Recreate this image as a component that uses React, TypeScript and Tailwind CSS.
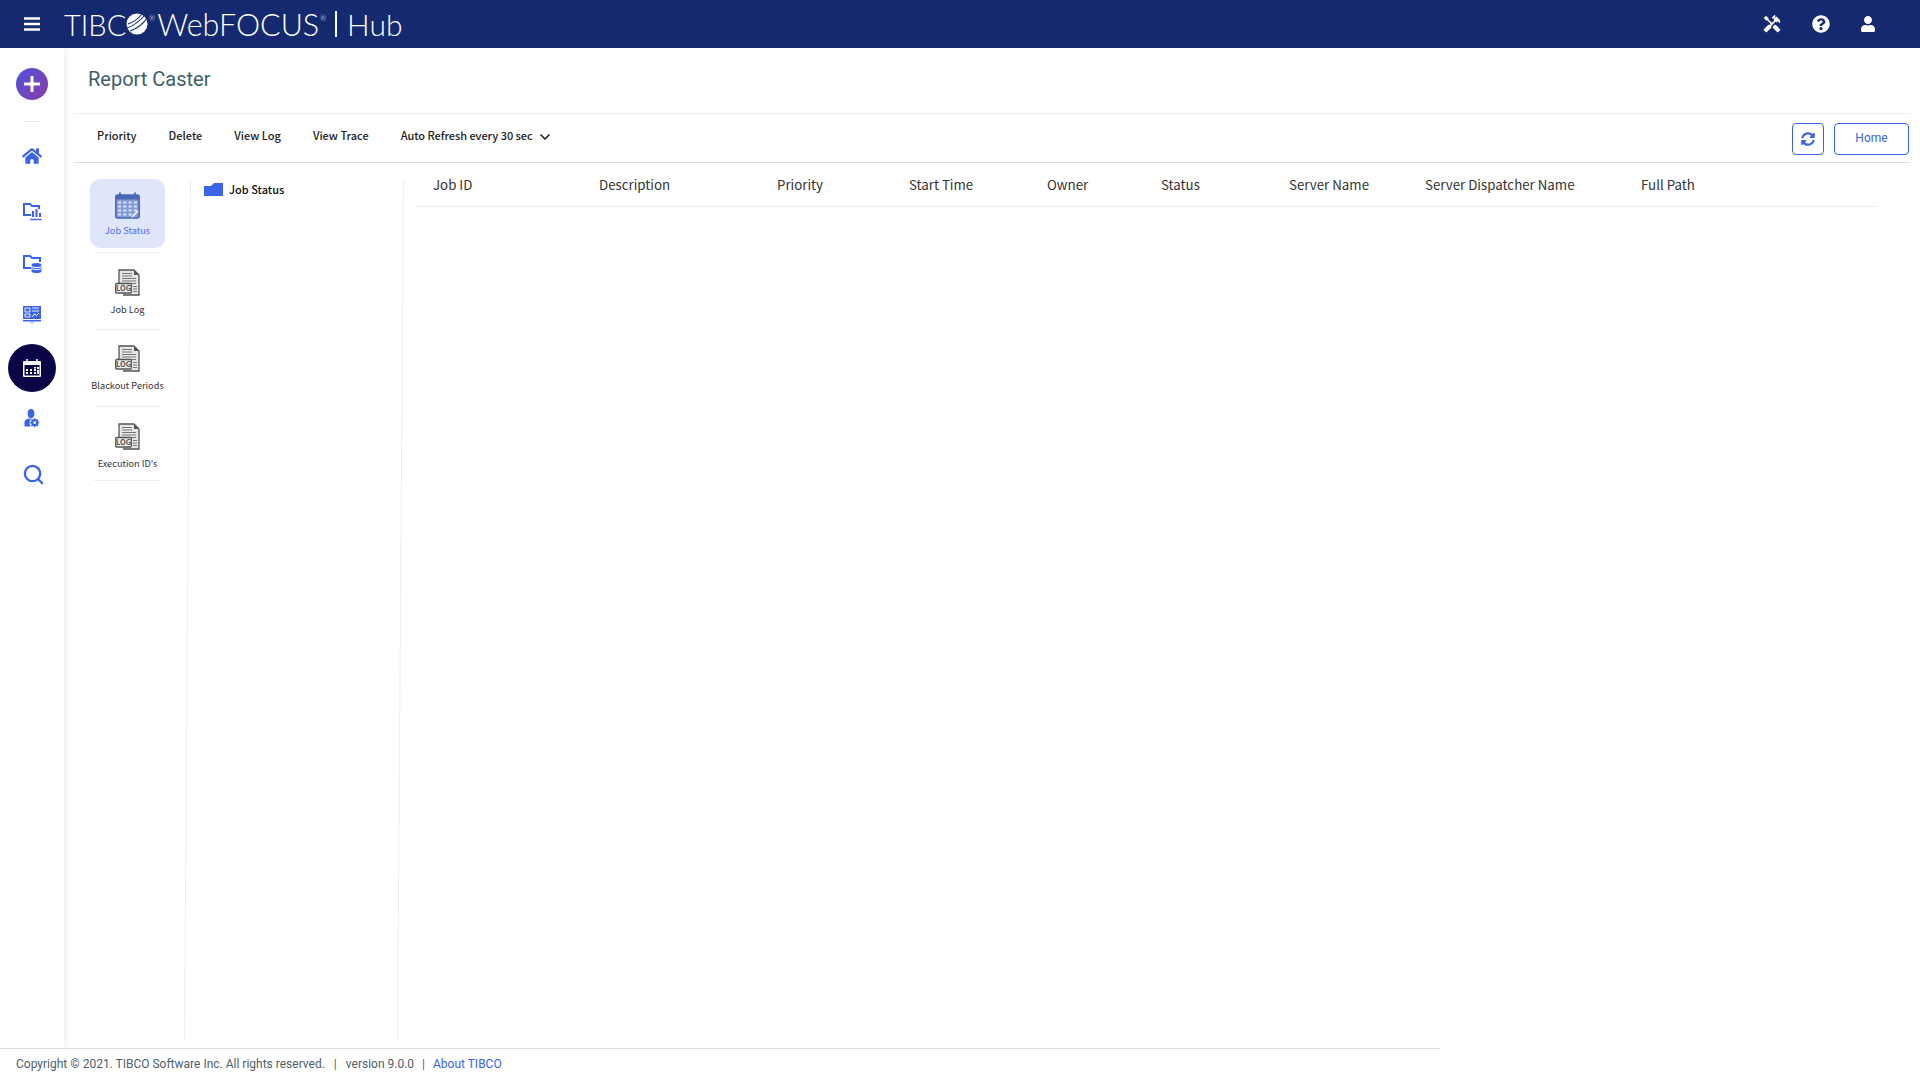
import { ChevronDown, Search } from 'lucide-react';
import { FaHome, FaQuestionCircle, FaSyncAlt, FaUser } from 'react-icons/fa';
import { MdHandyman } from 'react-icons/md';

const LogoMark = () => (
  <svg viewBox="0 0 22 22" className="h-[22px] w-[22px]">
    <circle cx="11" cy="11" r="10.5" fill="#fff" />
    <path d="M1 15 C7 13 14 8 20 1 M2 11 C8 9 12 6 16 1 M4 18 C10 16 17 11 22 4" stroke="#14296f" strokeWidth="1.1" fill="none" />
  </svg>
);

const FolderChart = () => (
  <svg viewBox="0 0 20 20" className="h-5 w-5" fill="none" stroke="#3a63e8" strokeWidth="2">
    <path d="M9 14H2V3h6l2 2h7v3" />
    <path d="M11 10v6M14.500 8v8M18 12v4" strokeWidth="2" />
    <path d="M8 18.500h11.500" strokeWidth="1.400" />
  </svg>
);

const FolderData = () => (
  <svg viewBox="0 0 20 20" className="h-5 w-5">
    <path d="M9 15H2V3h6l2 2h8v4" fill="none" stroke="#3a63e8" strokeWidth="2" />
    <ellipse cx="14.500" cy="12" rx="5" ry="2" fill="#3a63e8" />
    <path d="M9.500 13.500c1 2 9 2 10 0v5c-1 2-9 2-10 0z" fill="#3a63e8" />
    <path d="M9.500 15.500c2 1.500 8 1.500 10 0" stroke="#fff" fill="none" />
  </svg>
);

const MonitorIcon = () => (
  <svg viewBox="0 0 20 20" className="h-5 w-5">
    <rect x="1" y="1" width="18" height="13" fill="#3a63e8" />
    <path d="M3 3h5v4H3zM3 9h5v3H3zM10 3h7M10 6h7" stroke="#fff" strokeWidth="0.900" fill="none" />
    <path d="M10 12l2.500-3 2 1.500 2.500-2.500" stroke="#fff" strokeWidth="1" fill="none" />
    <rect x="1" y="15" width="18" height="1.500" fill="#3a63e8" />
    <path d="M8 17h4v1.500H8z" fill="#b9c7f5" />
  </svg>
);

const CalendarWhite = () => (
  <svg viewBox="0 0 20 20" className="h-5 w-5">
    <rect x="1" y="3" width="18" height="16" rx="1" fill="#fff" />
    <rect x="2.500" y="7" width="15" height="10.500" fill="#0a0545" />
    <path d="M5 1v4M15 1v4" stroke="#fff" strokeWidth="1.500" />
    <path d="M4 11h2v2H4zM8 11h2v2H8zM12 11h2v2h-2zM15 9h2v2h-2zM4 14h2v2H4zM8 14h2v2H8zM12 14h2v2h-2zM15 12h2v4h-2zM12 9h2v1.500h-2z" fill="#fff" />
  </svg>
);

const UserGear = () => (
  <svg viewBox="0 0 20 20" className="h-5 w-5">
    <ellipse cx="9" cy="5.500" rx="3.400" ry="4.500" fill="#3a63e8" />
    <path d="M2.500 18.500v-4c0-2.500 2.500-4 6.500-4s5 1 6 2v6z" fill="#3a63e8" />
    <circle cx="12.700" cy="14.700" r="5.200" fill="#fff" />
    <circle cx="12.700" cy="14.700" r="2.400" fill="none" stroke="#3a63e8" strokeWidth="2" />
    <path d="M12.700 10.200v2M12.700 17.200v2M8.200 14.700h2M15.200 14.700h2M9.500 11.500l1.400 1.400M14.500 16.500l1.400 1.400M15.900 11.500l-1.400 1.400M10.900 16.500l-1.400 1.400" stroke="#3a63e8" strokeWidth="1.700" />
  </svg>
);

const CalendarBlue = () => (
  <svg viewBox="0 0 25 27" className="h-[27px] w-[25px]">
    <rect x="0.800" y="3" width="23.400" height="23" rx="2" fill="#8398d4" stroke="#4a67b8" strokeWidth="1.500" />
    <rect x="1" y="3" width="23" height="4.500" fill="#4a67b8" />
    <path d="M5 0.500v5M20 0.500v5" stroke="#4a67b8" strokeWidth="1.800" />
    <path d="M3 10.500h19M3 14.500h19M3 18.500h19M3 22.500h15" stroke="#dfe6f8" strokeWidth="2.200" strokeDasharray="3 2.300" />
    <path d="M17 25l6-6" stroke="#fff" strokeWidth="1.600" />
  </svg>
);

const LogIcon = () => (
  <svg viewBox="0 0 25 27" className="h-[27px] w-[25px]">
    <path d="M4 16V1h15l5 5v20H8" fill="#e6e6e6" stroke="#555" strokeWidth="1.300" />
    <path d="M19 1v5h5z" fill="#555" />
    <path d="M7 4.500h10M7 7h10M7 9.500h14M7 12h14M7 14.500h14" stroke="#777" strokeWidth="1.200" />
    <path d="M18 17.500h4M18 20h4M18 22.500h4" stroke="#777" strokeWidth="1.200" />
    <rect x="0.700" y="14.500" width="15.600" height="9.500" rx="1" fill="#eee" stroke="#555" strokeWidth="1.300" />
    <text x="8.500" y="22" textAnchor="middle" fontSize="7.500" fontWeight="700" fill="#555">LOG</text>
  </svg>
);

const FolderBlue = () => (
  <svg viewBox="0 0 19 13" className="h-[13px] w-[19px]">
    <path d="M0 3h7l3-3h9v13H0z" fill="#3a63e8" />
  </svg>
);

const sideIcons = [
  { el: <FaHome className="text-[20px] text-[#3a63e8]" />, cls: 'mt-[24px]' },
  { el: <FolderChart />, cls: 'mt-[35px]' },
  { el: <FolderData />, cls: 'mt-[32px]' },
  { el: <MonitorIcon />, cls: 'mt-[32px]' },
];

const jobItems = [
  { label: 'Job Log', cls: 'pt-[16px]', line: 'mt-[12px]' },
  { label: 'Blackout Periods', cls: 'pt-[15px]', line: 'mt-[13px]' },
  { label: "Execution ID's", cls: 'pt-[16px]', line: 'mt-[9px]' },
];

const columns = [
  { label: 'Job ID', cls: 'w-[166px]' },
  { label: 'Description', cls: 'w-[178px]' },
  { label: 'Priority', cls: 'w-[132px]' },
  { label: 'Start Time', cls: 'w-[138px]' },
  { label: 'Owner', cls: 'w-[114px]' },
  { label: 'Status', cls: 'w-[128px]' },
  { label: 'Server Name', cls: 'w-[136px]' },
  { label: 'Server Dispatcher Name', cls: 'w-[216px]' },
  { label: 'Full Path', cls: '' },
];

export default function App() {
  return (
    <div className="flex h-screen flex-col overflow-hidden bg-white font-['Noto_Sans_CJK_SC',sans-serif]">
      <header className="flex h-12 shrink-0 items-center bg-[#14296f] text-white">
        <div className="flex w-16 justify-center">
          <svg viewBox="0 0 16 14" className="h-[14px] w-4">
            <path d="M0 1.500h16M0 7h16M0 12.500h16" stroke="#fff" strokeWidth="2.400" />
          </svg>
        </div>
        <div className="flex items-center font-['Lato',sans-serif] text-[29px] leading-none font-light">
          <span>TIBC</span>
          <LogoMark />
          <span className="mb-3 ml-px text-[7px]">®</span>
          <span className="ml-[2px] text-[30.500px]">WebFOCUS</span>
          <span className="mb-3 ml-px text-[7px]">®</span>
          <span className="mr-[10px] ml-[9px] h-[26px] w-[2px] bg-white" />
          <span className="text-[30px]">Hub</span>
        </div>
        <div className="ml-auto flex items-center gap-[30px] pr-[44px] text-[18px]">
          <MdHandyman className="text-[20px]" />
          <FaQuestionCircle />
          <FaUser className="text-[16px]" />
        </div>
      </header>

      <div className="flex min-h-0 flex-1">
        <aside className="flex w-16 shrink-0 flex-col items-center pt-5 shadow-[2px_0_6px_rgba(0,0,0,0.07)]">
          <div className="flex h-8 w-8 items-center justify-center rounded-full bg-gradient-to-br from-[#4a50e0] to-[#8a38a8]">
            <svg viewBox="0 0 16 16" className="h-4 w-4">
              <path d="M8 1v14M1 8h14" stroke="#fff" strokeWidth="3" strokeLinecap="round" />
            </svg>
          </div>
          <div className="mt-[21px] h-px w-4 bg-gray-200" />
          {sideIcons.map((s, i) => (
            <div key={i} className={s.cls}>
              {s.el}
            </div>
          ))}
          <div className="mt-[19px] flex h-12 w-12 items-center justify-center rounded-full bg-[#0a0545]">
            <CalendarWhite />
          </div>
          <div className="mt-[16px]">
            <UserGear />
          </div>
          <Search className="mt-[35px] ml-[2px] h-[23px] w-[23px] text-[#3a63e8]" strokeWidth={2.4} />
        </aside>

        <main className="flex min-w-0 flex-1 flex-col pr-[10px] pl-[10px]">
          <div className="flex h-[66px] shrink-0 items-center border-b border-[#eeeeee] pb-[3px] pl-[14px] font-['Roboto',sans-serif] text-[20px] text-[#3f5d6b]">
            Report Caster
          </div>
          <div className="flex h-[49px] shrink-0 items-center border-b border-[#dddddd] pr-px pl-[23px] text-[11px] font-medium text-[#222222]">
            <span className="mb-[5px]">Priority</span>
            <span className="mb-[5px] ml-[32px]">Delete</span>
            <span className="mb-[5px] ml-[32px]">View Log</span>
            <span className="mb-[5px] ml-[32px]">View Trace</span>
            <span className="mb-[5px] ml-[32px] tracking-[-0.05px]">Auto Refresh every 30 sec</span>
            <ChevronDown className="mb-[2px] ml-[4px] h-4 w-4" strokeWidth={2.5} />
            <button className="mt-[2px] ml-auto flex h-8 w-8 items-center justify-center rounded border border-[#3a63e8] text-[14px] text-[#3a63e8]">
              <FaSyncAlt />
            </button>
            <button className="mt-[2px] ml-[10px] h-8 w-[75px] rounded border border-[#3a63e8] pb-[2px] font-['Roboto',sans-serif] text-[12px] font-normal text-[#3a63e8]">
              Home
            </button>
          </div>

          <div className="flex min-h-0 flex-1">
            <div className="flex w-[113px] shrink-0 flex-col items-start pt-[16px] pl-[16px] text-[9.200px]">
              <div className="flex h-[69px] w-[75px] shrink-0 flex-col items-center rounded-[10px] bg-[#dfe6f9] pt-[13px] text-[#4a70e8]">
                <CalendarBlue />
                <span className="mt-[3px] leading-4">Job Status</span>
              </div>
              <div className="mt-[4px] ml-1 h-px w-[67px] shrink-0 bg-[#eeeeee]" />
              {jobItems.map(item => (
                <div key={item.label} className={`flex w-[75px] shrink-0 flex-col items-center text-[#333333] ${item.cls}`}>
                  <LogIcon />
                  <span className="mt-[5px] whitespace-nowrap leading-4">{item.label}</span>
                  <div className={`h-px w-[67px] bg-[#eeeeee] ${item.line}`} />
                </div>
              ))}
            </div>

            <div className="mt-[17px] mb-[8px] w-px shrink-0 skew-x-[-0.4deg] bg-[#eeeeee]" />

            <div className="flex w-[212px] shrink-0 items-center gap-[6px] self-start pt-[20px] pl-[16px] text-[11px] font-medium text-[#111111]">
              <FolderBlue />
              <span className="leading-none">Job Status</span>
            </div>

            <div className="mt-[17px] mb-[8px] w-px shrink-0 skew-x-[-0.4deg] bg-[#eeeeee]" />

            <div className="min-w-0 flex-1 pt-[10px] pr-[33px] pl-[15px]">
              <div className="flex h-[34px] items-center border-b border-[#eeeeee] pb-[10px] pl-[17px] text-[13.300px] whitespace-nowrap text-[#333333]">
                {columns.map(c => (
                  <span key={c.label} className={`shrink-0 ${c.cls}`}>
                    {c.label}
                  </span>
                ))}
              </div>
            </div>
          </div>
        </main>
      </div>

      <footer className="flex h-8 w-[1440px] shrink-0 items-center border-t border-[#dddddd] pb-px pl-4 font-['Roboto',sans-serif] text-[12px] text-[#4d5f69]">
        <span>Copyright © 2021. TIBCO Software Inc. All rights reserved.</span>
        <span className="mx-[9px]">|</span>
        <span>version 9.0.0</span>
        <span className="mx-[8px]">|</span>
        <span className="text-[#3a63e8]">About TIBCO</span>
      </footer>
    </div>
  );
}
